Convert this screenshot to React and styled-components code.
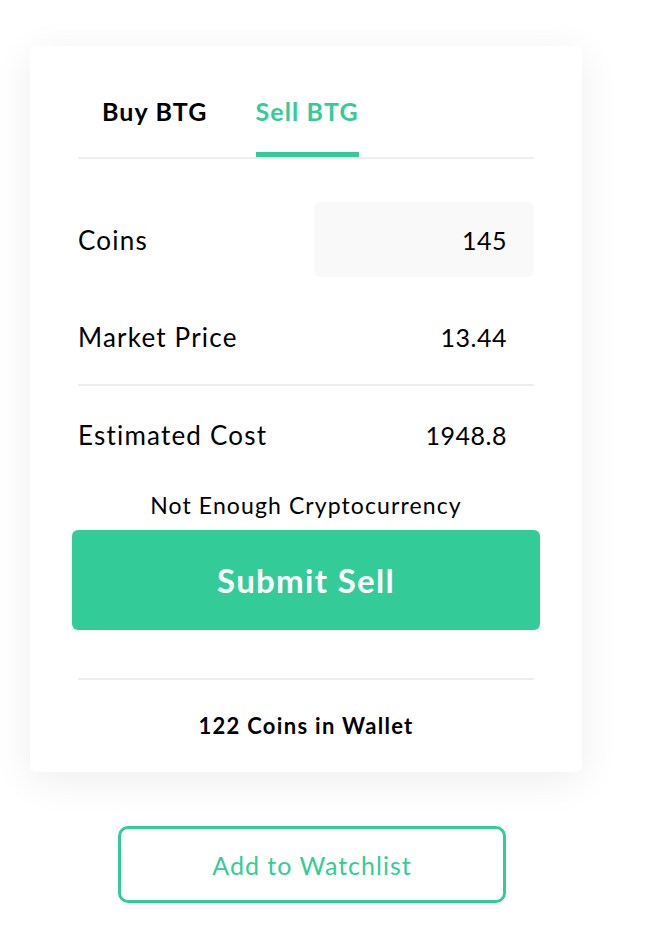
import styled, { createGlobalStyle } from "styled-components";

const GlobalStyle = createGlobalStyle`
  body {
    margin: 0;
    background: #ffffff;
    font-family: "Lato", "Noto Sans", sans-serif;
    color: #000000;
  }
`;

const GREEN = "#33cc99";

const App = () => {
  return (
    <Page>
      <GlobalStyle />
      <Card>
        <TabBar>
          <Tab>Buy BTG</Tab>
          <Tab active>Sell BTG</Tab>
        </TabBar>
        <InputRow>
          <Label>Coins</Label>
          <InputBox>145</InputBox>
        </InputRow>
        <PriceRow>
          <Label>Market Price</Label>
          <Value>13.44</Value>
        </PriceRow>
        <CostRow>
          <Label>Estimated Cost</Label>
          <Value>1948.8</Value>
        </CostRow>
        <Warning>Not Enough Cryptocurrency</Warning>
        <SubmitButton>Submit Sell</SubmitButton>
        <Wallet>122 Coins in Wallet</Wallet>
      </Card>
      <WatchButton>Add to Watchlist</WatchButton>
    </Page>
  );
};

export default App;

const Page = styled.div`
  width: 552px;
  padding: 46px 30px;
  display: flex;
  flex-direction: column;
`;

const Card = styled.div`
  background: #ffffff;
  border-radius: 6px;
  box-shadow: 0 8px 40px rgba(0, 0, 0, 0.07);
  padding: 50px 48px 34px;
  display: flex;
  flex-direction: column;
`;

const TabBar = styled.div`
  display: flex;
  gap: 48px;
  padding-left: 24px;
  border-bottom: 2px solid #eeeeee;
`;

const Tab = styled.div`
  font-size: 25px;
  font-weight: 700;
  letter-spacing: 1.1px;
  line-height: 30px;
  color: ${(p) => (p.active ? GREEN : "#000000")};
  padding-bottom: 26px;
  border-bottom: 5px solid ${(p) => (p.active ? GREEN : "transparent")};
`;

const InputRow = styled.div`
  display: flex;
  justify-content: space-between;
  align-items: center;
  margin-top: 43px;
  height: 75px;
`;

const Label = styled.div`
  font-size: 26px;
  letter-spacing: 1.2px;
  line-height: 30px;
`;

const Value = styled.div`
  font-size: 25px;
  letter-spacing: 0.5px;
  line-height: 30px;
  padding-right: 27px;
`;

const InputBox = styled.div`
  width: 220px;
  height: 75px;
  box-sizing: border-box;
  background: #f9f9f9;
  border-radius: 6px;
  padding-right: 27px;
  display: flex;
  align-items: center;
  justify-content: flex-end;
  font-size: 25px;
  letter-spacing: 0.5px;
`;

const PriceRow = styled.div`
  display: flex;
  justify-content: space-between;
  align-items: center;
  margin-top: 45px;
  padding-bottom: 32px;
  border-bottom: 2px solid #eeeeee;
`;

const CostRow = styled.div`
  display: flex;
  justify-content: space-between;
  align-items: center;
  margin-top: 34px;
`;

const Warning = styled.div`
  margin-top: 43px;
  text-align: center;
  font-size: 23px;
  letter-spacing: 1.1px;
  line-height: 24px;
`;

const SubmitButton = styled.button`
  margin: 13px -6px 0;
  height: 100px;
  border: none;
  border-radius: 6px;
  background: ${GREEN};
  color: #ffffff;
  font-family: inherit;
  font-size: 33px;
  font-weight: 700;
  letter-spacing: 1.3px;
`;

const Wallet = styled.div`
  margin-top: 48px;
  border-top: 2px solid #eeeeee;
  padding-top: 34px;
  text-align: center;
  font-size: 22px;
  font-weight: 700;
  letter-spacing: 1.3px;
  line-height: 24px;
`;

const WatchButton = styled.button`
  margin: 54px 0 0 88px;
  width: 388px;
  height: 77px;
  background: #ffffff;
  border: 3px solid ${GREEN};
  border-radius: 10px;
  color: ${GREEN};
  font-family: inherit;
  font-size: 25px;
  font-weight: 400;
  letter-spacing: 1px;
`;
